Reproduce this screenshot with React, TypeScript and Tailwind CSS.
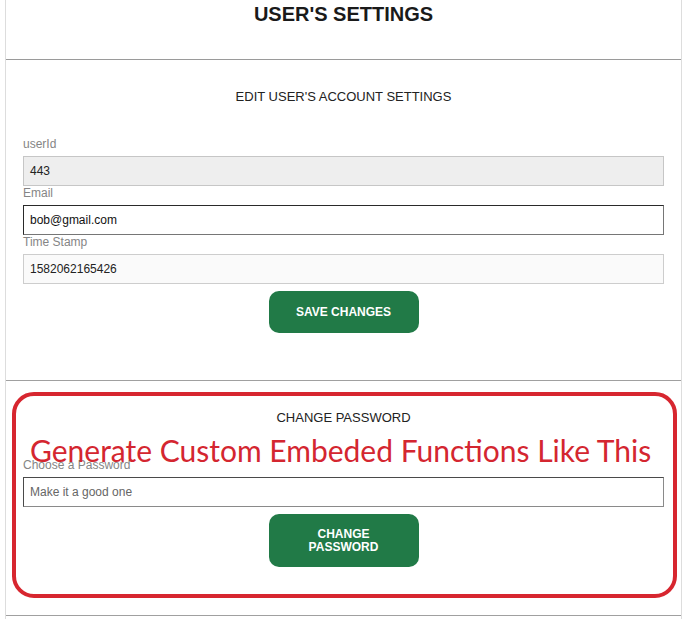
import React from 'react';

const font = { fontFamily: '"Liberation Sans", Arial, sans-serif' };

type Tone = 'disabled' | 'focus' | 'soft' | 'empty';

function Field({ label, value, tone }: { label: string; value: string; tone: Tone }) {
  const box =
    tone === 'disabled'
      ? 'bg-[#eeeeee] border border-[#c6c6c6] text-[#222]'
      : tone === 'focus'
      ? 'bg-white border border-[#2a2a2a] border-b-[#767676] border-r-[#767676] text-[#111]'
      : tone === 'soft'
      ? 'bg-[#fafafa] border border-[#cdcdcd] text-[#222]'
      : 'bg-white border border-[#4a4a4a] border-b-[#8a8a8a] border-r-[#8a8a8a] text-[#666]';
  return (
    <div className="flex flex-col">
      <label className="h-[19px] text-[12px] leading-[15px] text-[#858585]">{label}</label>
      <div className={`h-[30px] flex items-center px-[6px] text-[12px] ${box}`}>{value}</div>
    </div>
  );
}

export default function App() {
  return (
    <div className="w-[684px] h-[619px] bg-white overflow-hidden" style={font}>
      <div className="ml-[5px] w-[677px] h-full border-x border-[#dddddd] flex flex-col">
        <div className="h-[60px] shrink-0 border-b border-[#9a9a9a] flex justify-center pt-[3px]">
          <h1 className="text-[20px] leading-[23px] font-bold text-[#1a1a1a]">USER'S SETTINGS</h1>
        </div>

        <div className="h-[321px] shrink-0 border-b border-[#a0a0a0] px-[17px] pt-[29px]">
          <p className="text-center text-[13px] leading-[16px] text-[#222] mb-[32px]">EDIT USER'S ACCOUNT SETTINGS</p>
          <div className="flex flex-col">
            <Field label="userId" value="443" tone="disabled" />
            <Field label="Email" value="bob@gmail.com" tone="focus" />
            <Field label="Time Stamp" value="1582062165426" tone="soft" />
          </div>
          <div className="flex justify-center mt-[7px]">
            <button className="w-[150px] h-[42px] rounded-[10px] bg-[#217a47] text-white text-[12px] font-bold">
              SAVE CHANGES
            </button>
          </div>
        </div>

        <div className="relative h-[235px] shrink-0 border-b border-[#a0a0a0] px-[17px] pt-[29px]">
          <p className="text-center text-[13px] leading-[16px] text-[#222] mb-[32px]">CHANGE PASSWORD</p>
          <Field label="Choose a Password" value="Make it a good one" tone="empty" />
          <div className="flex justify-center mt-[7px]">
            <button className="w-[150px] h-[53px] rounded-[10px] bg-[#217a47] text-white text-[12px] font-bold leading-[12.5px]">
              CHANGE
              <br />
              PASSWORD
            </button>
          </div>

          <div className="absolute left-[6px] top-[11px] w-[665px] h-[206px] rounded-[22px] border-[4px] border-[#d7262f] pointer-events-none">
            <p
              className="absolute left-[14px] top-[36px] text-[30px] leading-[36px] text-[#d42630] whitespace-nowrap"
              style={{ fontFamily: 'Lato, "Open Sans", sans-serif' }}
            >
              Generate Custom Embeded Functions Like This
            </p>
          </div>
        </div>
      </div>
    </div>
  );
}
